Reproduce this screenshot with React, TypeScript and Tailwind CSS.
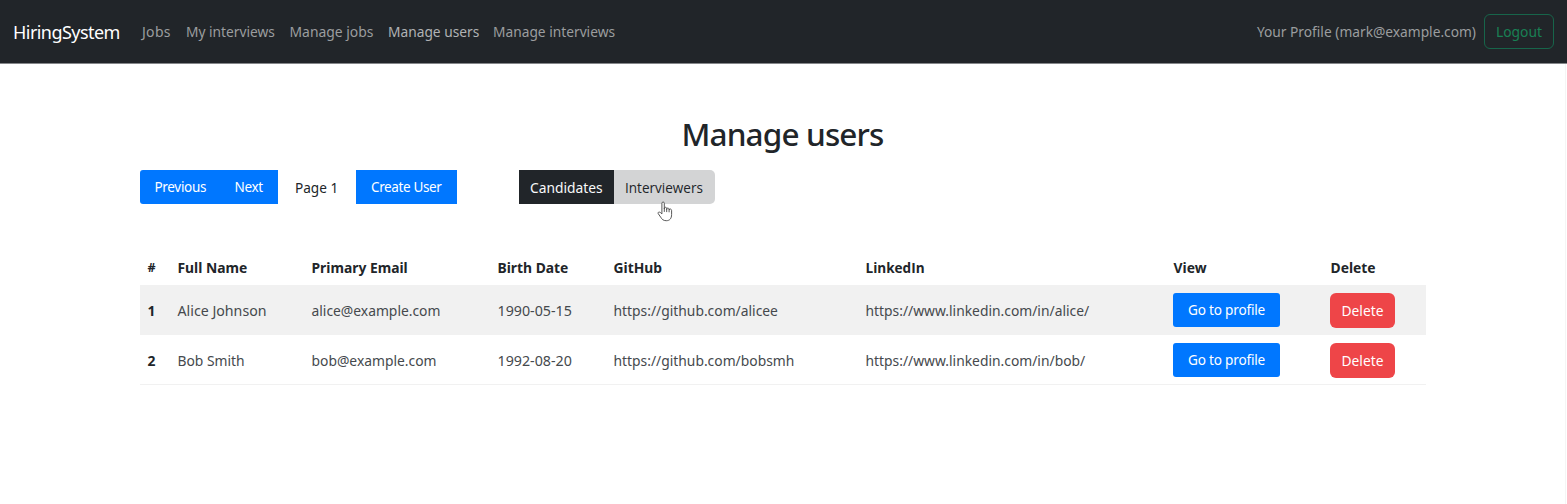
const users = [
  { id: 1, name: "Alice Johnson", nameClass: "text-[14.2px]", email: "alice@example.com", born: "1990-05-15", github: "https://github.com/alicee", linkedin: "https://www.linkedin.com/in/alice/" },
  { id: 2, name: "Bob Smith", nameClass: "text-[13.85px]", email: "bob@example.com", born: "1992-08-20", github: "https://github.com/bobsmh", linkedin: "https://www.linkedin.com/in/bob/" },
];

function HandCursor() {
  return (
    <svg className="absolute left-[43px] top-[31px] h-[21px] w-[16px]" viewBox="0 0 16 21" fill="#ffffff" stroke="#444444" strokeWidth="0.9" strokeLinejoin="round" strokeLinecap="round">
      <path d="M4.9 12.5V2.2C4.9 .6 7.3 .6 7.3 2.2V8C7.3 5.7 9.7 5.9 9.7 7.6V8.4C9.7 6.5 12.1 6.8 12.1 8.3V9C12.2 7.5 14.6 7.7 14.6 9.5V13.5C14.6 17.6 12.6 19.7 9.3 19.7C6.3 19.7 4.9 18.3 3.7 16.2L1.2 12.6C.6 11.3 2 10.5 3.1 11.3Z" />
      <path d="M7.3 8V10.5M9.7 8.4V10.7M12.1 9V10.9" fill="none" />
    </svg>
  );
}

export default function App() {
  return (
    <div className="flex h-[504px] w-full flex-col overflow-hidden bg-white font-['Noto_Sans',sans-serif] text-[13.85px] leading-5 whitespace-nowrap text-[#212529]">
      <nav className="flex h-16 shrink-0 items-center border-b border-[#85878a] bg-[#212529] pr-[13px] pl-[13px] text-[13.75px] text-[#9b9d9f]">
        <a className="w-[129px] text-[18px] leading-6 tracking-[-0.55px] text-white">HiringSystem</a>
        <a className="w-11 text-[14px] tracking-[0.3px]">Jobs</a>
        <a className="w-[103.5px]">My interviews</a>
        <a className="w-[98.5px] text-[13.9px]">Manage jobs</a>
        <a className="w-[105px] text-[#b0b2b4]">Manage users</a>
        <a>Manage interviews</a>
        <a className="mr-2 ml-auto">Your Profile (mark@example.com)</a>
        <button className="h-[35px] w-[70px] rounded-md border border-[#17654a] text-center text-[13.85px] text-[#198054]">Logout</button>
      </nav>

      <main className="mr-px flex-1 border-r border-[#f5f5f5] px-[139px] pt-[48px]">
        <h1 className="h-[44px] text-center text-[31.5px] leading-[44px] font-medium tracking-[-0.85px]">Manage users</h1>

        <div className="mt-[14px] flex h-[34px] items-center pl-px">
          <div className="flex h-full w-[137.5px] items-center overflow-hidden rounded-l-[3px] bg-[#0077ff] pb-px text-[13.5px] tracking-[-0.32px] text-white">
            <button className="ml-[14.5px] w-20 text-left">Previous</button>
            <button>Next</button>
          </div>
          <span className="w-[78.5px] pt-0.5 pl-[17.5px] text-[13.6px]">Page 1</span>
          <button className="h-full w-[100.5px] bg-[#0077ff] text-[13.5px] tracking-[-0.36px] text-white">Create User</button>
          <div className="ml-[62.5px] flex h-full">
            <button className="w-[94.5px] bg-[#212529] pt-0.5 text-[13.8px] text-[#f8f9fa]">Candidates</button>
            <div className="relative h-full">
              <button className="h-full w-[101px] rounded-r-[5px] bg-[#d3d4d5] pt-0.5 font-['Open_Sans',sans-serif] text-[13.55px] text-[#212529]">Interviewers</button>
              <HandCursor />
            </div>
          </div>
        </div>

        <table className="mt-[46px] ml-px w-[1286px] table-fixed border-collapse text-left">
          <colgroup>
            <col className="w-[30px]" />
            <col className="w-[134px]" />
            <col className="w-[186px]" />
            <col className="w-[116px]" />
            <col className="w-[252px]" />
            <col className="w-[308px]" />
            <col className="w-[157px]" />
            <col />
          </colgroup>
          <thead>
            <tr className="h-[35px] [&>th]:pl-[7.5px]">
              <th className="text-[12.5px]">#</th>
              <th>Full Name</th>
              <th>Primary Email</th>
              <th>Birth Date</th>
              <th>GitHub</th>
              <th className="font-['Open_Sans',sans-serif] text-[13.55px]">LinkedIn</th>
              <th>View</th>
              <th>Delete</th>
            </tr>
          </thead>
          <tbody className="text-[#45494d]">
            {users.map((user) => (
              <tr key={user.id} className="h-[50px] odd:bg-[#f1f1f1] even:shadow-[inset_0_-1px_0_#f1f1f1] [&>td]:pt-px [&>td]:pl-[7.5px]">
                <th className="pt-px pl-[7.5px] text-[#212529]">{user.id}</th>
                <td className={user.nameClass}>{user.name}</td>
                <td>{user.email}</td>
                <td className="text-[14.25px]">{user.born}</td>
                <td>{user.github}</td>
                <td>{user.linkedin}</td>
                <td className="align-top">
                  <button className="mt-[7px] -ml-[0.5px] block h-[34px] w-[107px] rounded-[3px] bg-[#0077ff] text-[13.6px] tracking-[-0.2px] text-white">Go to profile</button>
                </td>
                <td className="align-top">
                  <button className="mt-[7px] -ml-[0.5px] block h-[35px] w-[65px] rounded-md bg-[#ee4548] pt-px text-[13.8px] text-white">Delete</button>
                </td>
              </tr>
            ))}
          </tbody>
        </table>
      </main>
    </div>
  );
}
